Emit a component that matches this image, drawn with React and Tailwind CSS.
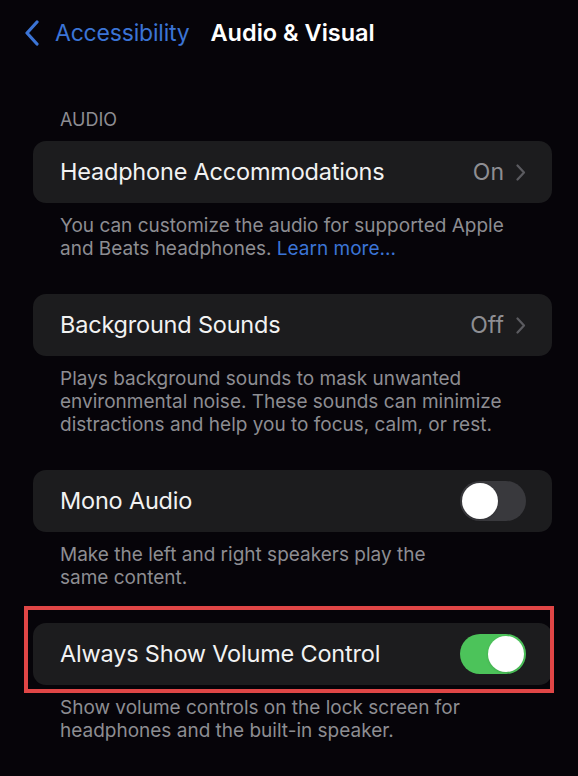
import React, { useState } from 'react';

function Chevron() {
  return (
    <svg width="10" height="17" viewBox="0 0 10 17" fill="none" className="ml-3">
      <path d="M1.5 1.5 L8 8.5 L1.5 15.5" stroke="#5b5b60" strokeWidth="2.2" strokeLinecap="round" strokeLinejoin="round" />
    </svg>
  );
}

function Toggle({ on, onClick }) {
  return (
    <button
      onClick={onClick}
      className={`relative w-[66px] h-[40px] rounded-full shrink-0 ${on ? 'bg-[#4cc35a]' : 'bg-[#39393d]'}`}
    >
      <span
        className={`absolute top-[2px] w-[36px] h-[36px] rounded-full bg-white shadow ${on ? 'left-[28px]' : 'left-[2px]'}`}
      />
    </button>
  );
}

function Row({ label, value, toggle, on, onToggle }) {
  return (
    <div className="h-[62px] rounded-[13px] bg-[#1c1c1e] flex items-center pl-[27px] pr-[26px]">
      <span className="flex-1 text-[23.5px] text-[#f2f2f2] tracking-[-0.2px]">{label}</span>
      {toggle ? (
        <Toggle on={on} onClick={onToggle} />
      ) : (
        <span className="flex items-center text-[23px] text-[#8e8e93]">
          {value}
          <Chevron />
        </span>
      )}
    </div>
  );
}

function Note({ children }) {
  return (
    <p className="pt-[11px] pl-[27px] pr-[10px] text-[19px] leading-[23px] text-[#8d8d92]">{children}</p>
  );
}

export default function App() {
  const [mono, setMono] = useState(false);
  const [volume, setVolume] = useState(true);

  return (
    <div
      className="relative w-[578px] h-[776px] bg-[#060409] overflow-hidden"
      style={{ fontFamily: 'Inter, "Noto Sans", sans-serif' }}
    >
      {/* nav bar */}
      <div className="h-[66px] flex items-center pl-[24px]">
        <svg width="16" height="26" viewBox="0 0 16 26" fill="none">
          <path d="M13 2 L3 13 L13 24" stroke="#3b74d6" strokeWidth="3.2" strokeLinecap="round" strokeLinejoin="round" />
        </svg>
        <span className="ml-[15px] text-[23px] text-[#3b74d6] tracking-[-0.2px]">Accessibility</span>
        <span className="ml-[21px] text-[23.5px] font-semibold text-white">Audio &amp; Visual</span>
      </div>

      <div className="pl-[33px] pr-[26px] pt-[44px]">
        <div className="pl-[27px] h-[20px] leading-[20px] text-[18px] text-[#8d8d92]">AUDIO</div>

        <div className="mt-[11px]">
          <Row label="Headphone Accommodations" value="On" />
          <Note>
            You can customize the audio for supported Apple
            <br />
            and Beats headphones. <span className="text-[#3b74d6]">Learn more...</span>
          </Note>
        </div>

        <div className="mt-[34px]">
          <Row label="Background Sounds" value="Off" />
          <Note>
            Plays background sounds to mask unwanted
            <br />
            environmental noise. These sounds can minimize
            <br />
            distractions and help you to focus, calm, or rest.
          </Note>
        </div>

        <div className="mt-[34px]">
          <Row label="Mono Audio" toggle on={mono} onToggle={() => setMono(!mono)} />
          <Note>
            Make the left and right speakers play the
            <br />
            same content.
          </Note>
        </div>

        <div className="mt-[34px]">
          <Row label="Always Show Volume Control" toggle on={volume} onToggle={() => setVolume(!volume)} />
          <Note>
            Show volume controls on the lock screen for
            <br />
            headphones and the built-in speaker.
          </Note>
        </div>
      </div>

      {/* red highlight annotation */}
      <div className="absolute left-[24px] top-[606px] w-[530px] h-[87px] border-[4px] border-[#e04646] pointer-events-none" />
    </div>
  );
}
